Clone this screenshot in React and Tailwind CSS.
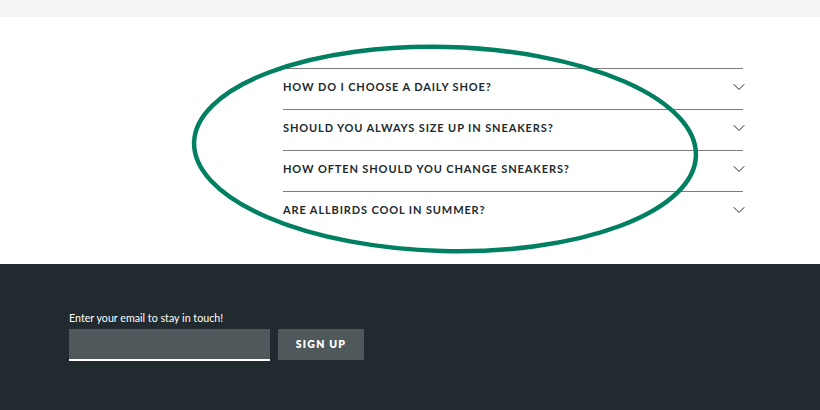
import { ChevronDown } from "lucide-react";

const questions = [
  "How do I choose a daily shoe?",
  "Should you always size up in sneakers?",
  "How often should you change sneakers?",
  "Are Allbirds cool in summer?",
];

export default function App() {
  return (
    <div className="relative w-[820px] h-[410px] overflow-hidden bg-white" style={{ fontFamily: "Lato, 'Open Sans', sans-serif" }}>
      <div className="h-[17px] bg-[#f4f4f4]" />

      <section className="h-[247px] pt-[51px]">
        <div className="ml-[283px] w-[460px]">
          {questions.map((q) => (
            <div key={q} className="flex h-[41px] items-center justify-between border-t border-[#7a7a7a] pb-[4px]">
              <span className="text-[11px] font-bold uppercase tracking-[0.08em] text-[#212a2f]">{q}</span>
              <ChevronDown size={20} strokeWidth={1.2} className="-mr-[6px] text-[#212a2f]" />
            </div>
          ))}
        </div>
      </section>

      <footer className="h-[146px] bg-[#212a2f] pl-[69px] pt-[46px]">
        <p className="text-[10.7px] leading-[15px] text-white">Enter your email to stay in touch!</p>
        <div className="mt-[4px] flex gap-[8px]">
          <div className="h-[32px] w-[201px] border-b-2 border-white bg-[#4f585b]" />
          <button className="h-[31px] w-[86px] rounded-[1px] bg-[#4f585b] text-[10.5px] font-extrabold uppercase tracking-[0.12em] text-white">
            Sign up
          </button>
        </div>
      </footer>

      <svg className="pointer-events-none absolute left-0 top-0" width="820" height="410">
        <ellipse cx="445" cy="149" rx="251" ry="102" fill="none" stroke="#008060" strokeWidth="4.5" transform="rotate(1.5 445 149)" />
      </svg>
    </div>
  );
}
